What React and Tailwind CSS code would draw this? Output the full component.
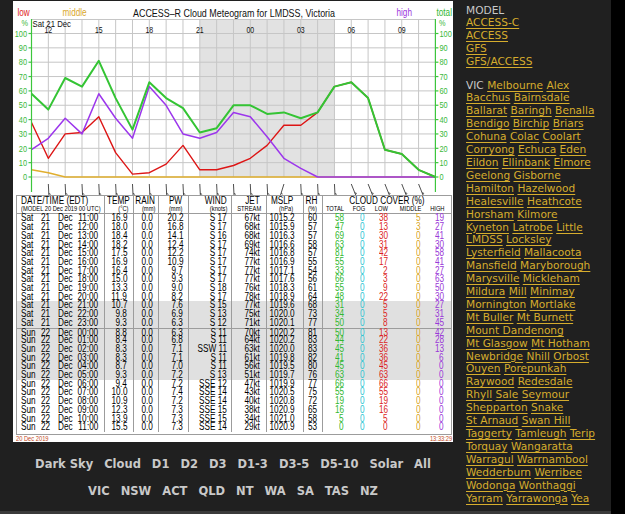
import clsx from 'clsx'

const TOTAL = [58, 47, 69, 63, 81, 55, 33, 66, 55, 48, 31, 34, 50, 50, 44, 45, 41, 45, 63, 66, 55, 19, 16, 5, 0]
const LOW = [38, 13, 30, 31, 42, 17, 2, 3, 9, 22, 5, 5, 8, 13, 22, 36, 36, 45, 63, 66, 55, 19, 16, 5, 0]
const MIDDLE = [5, 3, 0, 0, 0, 0, 0, 0, 0, 0, 0, 0, 0, 0, 0, 0, 0, 0, 0, 0, 0, 0, 0, 0, 0]
const HIGH = [19, 27, 41, 30, 58, 41, 27, 63, 50, 30, 27, 31, 45, 42, 28, 13, 6, 0, 0, 0, 0, 0, 0, 0, 0]
const TEMP = ['16.9', '18.0', '18.4', '18.2', '17.5', '16.9', '16.4', '15.0', '13.3', '11.9', '10.7', '9.8', '9.3', '8.8', '8.4', '8.3', '8.3', '8.7', '9.3', '9.4', '10.0', '10.9', '12.3', '13.9', '15.5']
const PW = ['20.2', '16.8', '14.1', '12.4', '12.2', '10.9', '9.7', '9.3', '9.0', '8.2', '7.6', '6.9', '6.3', '6.3', '6.8', '7.1', '7.1', '7.0', '7.2', '7.2', '7.4', '7.2', '7.3', '7.3', '7.3']
const WIND = ['S 17', 'S 17', 'S 16', 'S 17', 'S 17', 'S 17', 'S 17', 'S 17', 'S 18', 'S 17', 'S 15', 'S 13', 'S 12', 'S 11', 'S 11', 'SSW 11', 'S 11', 'S 11', 'S 13', 'SSE 12', 'SSE 14', 'SSE 14', 'SSE 15', 'SSE 15', 'SSE 14']
const JET = [67, 68, 68, 69, 74, 77, 77, 77, 76, 78, 77, 75, 71, 70, 64, 63, 61, 56, 51, 47, 43, 40, 38, 34, 29]
const MSLP = ['1015.2', '1015.9', '1016.3', '1016.6', '1016.8', '1016.9', '1017.1', '1017.6', '1018.3', '1018.9', '1019.6', '1020.0', '1020.1', '1020.2', '1020.2', '1020.0', '1019.8', '1019.5', '1019.7', '1019.9', '1020.5', '1020.8', '1020.9', '1021.0', '1020.9']
const RH = [60, 57, 57, 58, 57, 55, 54, 56, 61, 64, 68, 73, 77, 81, 83, 83, 82, 80, 76, 77, 75, 72, 65, 58, 53]

const ROWS = TOTAL.map((_, i) => ({
  day: i < 13 ? 'Sat' : 'Sun',
  date: i < 13 ? 21 : 22,
  time: String((11 + i) % 24).padStart(2, '0') + ':00',
  night: i >= 10 && i <= 18,
  split: i === 13,
  temp: TEMP[i],
  pw: PW[i],
  wind: WIND[i],
  jet: JET[i] + 'kt',
  mslp: MSLP[i],
  rh: RH[i],
  total: TOTAL[i],
  low: LOW[i],
  middle: MIDDLE[i],
  high: HIGH[i],
}))

// no narrow face installed: squeeze Liberation Sans to Arial Narrow width
const SANS = 'Liberation Sans, Arial, sans-serif'
const COLS = 'grid grid-cols-[87px_29px_25px_30px_43px_35px_37px_19px_129px]'
const CLOUD_COLS = 'grid grid-cols-[21px_21px_23px_33px_23px]'
const LINE = 'border-[#9c9c9c]'

const X = (i) => 18.5 + i * 16.83
const Y = (v) => 176 - v * 1.435
const pts = (arr) => arr.map((v, i) => `${X(i).toFixed(1)},${Y(v).toFixed(1)}`).join(' ')

function Nr({ children, align = 'left', className }) {
  return (
    <span
      className={clsx(
        'inline-block shrink-0 whitespace-nowrap scale-x-[0.82]',
        align === 'right' && 'origin-right',
        align === 'left' && 'origin-left',
        align === 'center' && 'origin-center',
        className
      )}
    >
      {children}
    </span>
  )
}

function SText({ x, y, anchor = 'start', children, ...rest }) {
  return (
    <text transform={`translate(${x} ${y}) scale(0.82 1)`} textAnchor={anchor} {...rest}>
      {children}
    </text>
  )
}

function Barb({ i, dir }) {
  // shaft angle off vertical: S straight down, SSE leans right, SSW leans left
  const a = dir === 'SSE' ? 0.38 : dir === 'SSW' ? -0.3 : 0.05
  const x0 = X(i)
  const y0 = 183
  const ex = x0 + 12 * Math.sin(a)
  const ey = y0 + 12 * Math.cos(a)
  const fx = 3.6 * Math.cos(a) + 1.6 * Math.sin(a)
  const fy = 1.8 * Math.cos(a) - 1.1 * Math.sin(a)
  const mx = x0 + 9.5 * Math.sin(a)
  const my = y0 + 9.5 * Math.cos(a)
  return (
    <g stroke="#222" strokeWidth="0.8" fill="none">
      <line x1={x0} y1={y0} x2={ex} y2={ey} />
      <line x1={ex} y1={ey} x2={ex + fx} y2={ey + fy} />
      <line x1={mx} y1={my} x2={mx + fx * 0.5} y2={my + fy * 0.5} />
    </g>
  )
}

function Chart() {
  const ticks = [0, 10, 20, 30, 40, 50, 60, 70, 80, 90, 100]
  const hourLabels = [[1, '12'], [4, '15'], [7, '18'], [10, '21'], [13, '00'], [16, '03'], [19, '06'], [22, '09']]
  return (
    <svg width="440" height="195" className="block" fontFamily={SANS}>
      {/* title row */}
      <SText x="4.5" y="15" fontSize="10" fill="#e01e1e">low</SText>
      <SText x="49.5" y="15" fontSize="10" fill="#d9a72c">middle</SText>
      <text x="120" y="15.7" fontSize="11.5" fill="#111" textLength="202" lengthAdjust="spacingAndGlyphs">ACCESS–R  Cloud Meteogram for LMDSS, Victoria</text>
      <SText x="383.5" y="15" fontSize="10" fill="#9b35dd">high</SText>
      <SText x="423.5" y="15" fontSize="10" fill="#32b832">total</SText>

      {/* night shading */}
      <rect x={X(10)} y="18" width={X(18) - X(10)} height={176 - 18} fill="#e2e2e2" />

      {/* grid */}
      <g stroke="#c6c6c6" strokeWidth="1">
        <line x1={X(0)} x2={X(24)} y1="18.5" y2="18.5" />
        {ticks.map((v) => (
          <line key={v} x1={X(0)} x2={X(24)} y1={Y(v)} y2={Y(v)} />
        ))}
        {ROWS.map((_, i) => (
          <line key={i} x1={X(i)} x2={X(i)} y1="18.5" y2="176" />
        ))}
      </g>

      {/* series */}
      <g fill="none" strokeLinejoin="round">
        <polyline points={pts(MIDDLE)} stroke="#e0ae2e" strokeWidth="1.6" />
        <polyline points={pts(LOW)} stroke="#dd1515" strokeWidth="1.4" />
        <polyline points={pts(HIGH)} stroke="#9c36ec" strokeWidth="1.5" />
        <polyline points={pts(TOTAL)} stroke="#34c434" strokeWidth="2" />
      </g>

      {/* axes */}
      <g stroke="#3cc63c" strokeWidth="1.2">
        <line x1={X(0)} x2={X(0)} y1="18" y2="191" />
        <line x1={X(24)} x2={X(24)} y1="18" y2="191" />
        {ticks.map((v) => (
          <g key={v}>
            <line x1={X(0) - 3} x2={X(0)} y1={Y(v)} y2={Y(v)} />
            <line x1={X(24)} x2={X(24) + 3} y1={Y(v)} y2={Y(v)} />
          </g>
        ))}
      </g>
      <g fontSize="9" fill="#3ab83a">
        <SText x="8.5" y="24.5">%</SText>
        <SText x="426" y="24.5">%</SText>
        {ticks.map((v) => (
          <g key={v}>
            <SText x="14" y={Y(v) + 3.2} anchor="end">{v}</SText>
            <SText x="426.5" y={Y(v) + 3.2}>{v}</SText>
          </g>
        ))}
      </g>

      <SText x="19.5" y="25.8" fontSize="9.5" fill="#111">Sat 21 Dec</SText>
      <g fontSize="8.5" fill="#111">
        {hourLabels.map(([i, t]) => (
          <SText key={t} x={X(i)} y="32" anchor="middle">{t}</SText>
        ))}
      </g>

      {/* wind barbs */}
      {ROWS.slice(1, 24).map((r, k) => (
        <Barb key={k} i={k + 1} dir={r.wind.split(' ')[0]} />
      ))}
    </svg>
  )
}

const NUM_COLS = [
  { key: 'temp', hdr: 'TEMP', sub: '(°C)', hCls: 'pr-[3px]', sCls: 'pr-[4px]' },
  { key: 'rain', hdr: 'RAIN', sub: '(mm)', hCls: 'pr-[3px]', sCls: 'pr-[3px]' },
  { key: 'pw', hdr: 'PW', sub: '(mm)', hCls: 'pr-[6px]', sCls: 'pr-[6px]' },
  { key: 'wind', hdr: 'WIND', sub: '(knots)', hCls: 'pr-[4px]', sCls: 'pr-[4px]' },
  { key: 'jet', hdr: 'JET', sub: 'STREAM', hCls: 'pr-[6px]', sCls: 'pr-[5px]' },
  { key: 'mslp', hdr: 'MSLP', sub: '(hPa)', hCls: 'pr-[10px]', sCls: 'pr-[10px]' },
  { key: 'rh', hdr: 'RH', sub: '(%)', hCls: 'pr-[5px]', sCls: 'pr-[5px]' },
]

function Cell({ children, className }) {
  return (
    <div className={clsx('flex justify-end border-l', LINE, className)}>
      <Nr align="right">{children}</Nr>
    </div>
  )
}

function DataTable() {
  return (
    <div className={clsx('ml-[3px] w-[436px] border pb-[2px] font-["Liberation_Sans",Arial,sans-serif] text-black', LINE)}>
      {/* header */}
      <div className={clsx(COLS, 'h-[18px] border-b', LINE)}>
        <div className="pl-[4px]">
          <div className="text-[10px] leading-[10px]"><Nr>DATE/TIME (EDT)</Nr></div>
          <div className="text-[7px] leading-[7px] -mt-px"><Nr>(MODEL 20 Dec 2019 00 UTC)</Nr></div>
        </div>
        {NUM_COLS.map((c) => (
          <div key={c.key} className={clsx('border-l', LINE)}>
            <div className={clsx('flex justify-end text-[10px] leading-[10px]', c.hCls)}><Nr align="right">{c.hdr}</Nr></div>
            <div className={clsx('flex justify-end text-[7px] leading-[7px] -mt-px', c.sCls)}><Nr align="right">{c.sub}</Nr></div>
          </div>
        ))}
        <div className={clsx('border-l', LINE)}>
          <div className="flex justify-center text-[10px] leading-[10px]"><Nr align="center">CLOUD COVER (%)</Nr></div>
          <div className={clsx(CLOUD_COLS, 'text-[7px] leading-[7px] -mt-px')}>
            {['TOTAL', 'FOG', 'LOW', 'MIDDLE', 'HIGH'].map((t) => (
              <div key={t} className="flex justify-end"><Nr align="right">{t}</Nr></div>
            ))}
          </div>
        </div>
      </div>

      {/* rows */}
      {ROWS.map((r, i) => (
        <div
          key={i}
          className={clsx(
            COLS,
            'h-[8.71px] text-[10px] leading-[8.71px]',
            r.night && 'bg-[#e0e0e0]',
            r.split && 'border-t border-[#9c9c9c]'
          )}
        >
          <div className="flex">
            <span className="w-[21px] pl-[4px] shrink-0"><Nr>{r.day}</Nr></span>
            <span className="flex justify-end w-[12px] shrink-0"><Nr align="right">{r.date}</Nr></span>
            <span className="w-[23.3px] pl-[8.3px] shrink-0"><Nr>Dec</Nr></span>
            <span className="flex justify-end w-[25px] shrink-0"><Nr align="right">{r.time}</Nr></span>
          </div>
          <Cell className="pr-[6px]">{r.temp}</Cell>
          <Cell className="pr-[5px]">0.0</Cell>
          <Cell className="pr-[5px]">{r.pw}</Cell>
          <Cell className="pr-[4px]">{r.wind}</Cell>
          <Cell className="pr-[6px]">{r.jet}</Cell>
          <Cell className="pr-[8px]">{r.mslp}</Cell>
          <Cell className="pr-[5px]">{r.rh}</Cell>
          <div className={clsx('border-l', LINE, CLOUD_COLS)}>
            <div className="flex justify-end text-[#32b832]"><Nr align="right">{r.total}</Nr></div>
            <div className="flex justify-end text-[#2cc4d2]"><Nr align="right">0</Nr></div>
            <div className="flex justify-end text-[#dc1f1f]"><Nr align="right">{r.low}</Nr></div>
            <div className="flex justify-end text-[#d9a523]"><Nr align="right">{r.middle}</Nr></div>
            <div className="flex justify-end text-[#9a38d8]"><Nr align="right">{r.high}</Nr></div>
          </div>
        </div>
      ))}
    </div>
  )
}

const NAV_1 = ['Dark Sky', 'Cloud', 'D1', 'D2', 'D3', 'D1-3', 'D3-5', 'D5-10', 'Solar', 'All']
const NAV_2 = ['VIC', 'NSW', 'ACT', 'QLD', 'NT', 'WA', 'SA', 'TAS', 'NZ']

const PLACES = [
  ['Melbourne', 'Alex'],
  ['Bacchus', 'Bairnsdale'],
  ['Ballarat', 'Baringh', 'Benalla'],
  ['Bendigo', 'Birchip', 'Briars'],
  ['Cohuna', 'Colac', 'Coolart'],
  ['Corryong', 'Echuca', 'Eden'],
  ['Eildon', 'Ellinbank', 'Elmore'],
  ['Geelong', 'Gisborne'],
  ['Hamilton', 'Hazelwood'],
  ['Healesville', 'Heathcote'],
  ['Horsham', 'Kilmore'],
  ['Kyneton', 'Latrobe', 'Little'],
  ['LMDSS', 'Locksley'],
  ['Lysterfield', 'Mallacoota'],
  ['Mansfield', 'Maryborough'],
  ['Marysville', 'Mickleham'],
  ['Mildura', 'Mill', 'Minimay'],
  ['Mornington', 'Mortlake'],
  ['Mt Buller', 'Mt Burnett'],
  ['Mount Dandenong'],
  ['Mt Glasgow', 'Mt Hotham'],
  ['Newbridge', 'Nhill', 'Orbost'],
  ['Ouyen', 'Porepunkah'],
  ['Raywood', 'Redesdale'],
  ['Rhyll', 'Sale', 'Seymour'],
  ['Shepparton', 'Snake'],
  ['St Arnaud', 'Swan Hill'],
  ['Taggerty', 'Tamleugh', 'Terip'],
  ['Torquay', 'Wangaratta'],
  ['Warragul', 'Warrnambool'],
  ['Wedderburn', 'Werribee'],
  ['Wodonga', 'Wonthaggi'],
  ['Yarram', 'Yarrawonga', 'Yea'],
]

function Link({ children }) {
  return <a className="text-[#d6ad2d] underline underline-offset-[1.5px] cursor-pointer">{children}</a>
}

export default function App() {
  return (
    <div className="flex w-[625px] h-[514px] overflow-hidden bg-black">
      <div className="flex flex-col w-[611px]">
        <div className="flex flex-1 bg-[#202020]">
          {/* meteogram + nav */}
          <div className="w-[453px] pl-[13px] pt-px">
            <div className="flex flex-col w-[440px] h-[441px] bg-white">
              <Chart />
              <DataTable />
              <div className="flex flex-1 justify-between items-end pl-[3px] pr-px font-['Liberation_Sans',Arial,sans-serif] text-[7px] leading-[7px] text-[#c24a24]">
                <Nr>20 Dec 2019</Nr>
                <Nr align="right">13:33:29</Nr>
              </div>
            </div>
            <nav className="pt-[8.5px] font-['DejaVu_Sans','Verdana',sans-serif] font-bold text-[11.5px] text-[#c9c9c9]">
              <div className="flex justify-center gap-[11px] h-[27px] leading-[27px]">
                {NAV_1.map((t) => <a key={t} className="cursor-pointer">{t}</a>)}
              </div>
              <div className="flex justify-center gap-[11px] h-[27px] leading-[27px]">
                {NAV_2.map((t) => <a key={t} className="cursor-pointer">{t}</a>)}
              </div>
            </nav>
          </div>

          {/* model + location links */}
          <div className="pl-[13px] pt-[3.5px] font-['DejaVu_Sans','Verdana',sans-serif] text-[10.6px] leading-[12.9px] text-[#c9c9c9] whitespace-nowrap">
            <div>MODEL</div>
            <div><Link>ACCESS-C</Link></div>
            <div><Link>ACCESS</Link></div>
            <div><Link>GFS</Link></div>
            <div><Link>GFS/ACCESS</Link></div>
            <div className="mt-[10.5px]">
              {PLACES.map((line, n) => (
                <div key={n}>
                  {n === 0 && 'VIC '}
                  {line.map((p, k) => (
                    <span key={p}>
                      {k > 0 && ' '}
                      <Link>{p}</Link>
                    </span>
                  ))}
                </div>
              ))}
            </div>
          </div>
        </div>
        <div className="h-[3px] bg-[#3a3a3a]" />
      </div>
      <div className="flex-1 bg-black" />
    </div>
  )
}
